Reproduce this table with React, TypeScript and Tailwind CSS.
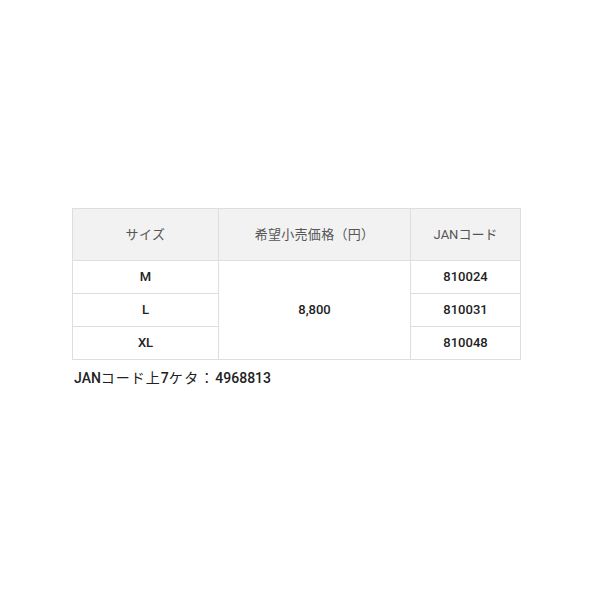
export default function App() {
  const font = { fontFamily: 'Roboto, "Noto Sans CJK JP", sans-serif' };
  const rows = [
    { size: 'M', jan: '810024' },
    { size: 'L', jan: '810031' },
    { size: 'XL', jan: '810048' },
  ];
  return (
    <div className="w-[600px] h-[600px] bg-white pt-[208px] pl-[72px]" style={font}>
      <table className="border-collapse text-[13px] text-[#222]">
        <thead>
          <tr className="bg-[#f2f2f2] h-[52px]">
            <th className="w-[146px] border border-[#dedede] font-normal text-[#555] tracking-[0.5px]">サイズ</th>
            <th className="w-[192px] border border-[#dedede] font-normal text-[#555] tracking-[0.3px]">希望小売価格（円）</th>
            <th className="w-[110px] border border-[#dedede] font-normal text-[#555]">JANコード</th>
          </tr>
        </thead>
        <tbody>
          {rows.map((r, i) => (
            <tr key={r.size} className="h-[33px]">
              <td className="border border-[#dedede] text-center font-medium">{r.size}</td>
              {i === 0 && (
                <td rowSpan={3} className="border border-[#dedede] text-center font-medium">8,800</td>
              )}
              <td className="border border-[#dedede] text-center font-medium">{r.jan}</td>
            </tr>
          ))}
        </tbody>
      </table>
      <p className="mt-[8px] ml-[2px] text-[14px] font-medium text-[#222]">
        JAN<span className="font-normal tracking-[1px]">コード上</span>7<span className="font-normal tracking-[1.5px]">ケタ：</span>4968813
      </p>
    </div>
  );
}
